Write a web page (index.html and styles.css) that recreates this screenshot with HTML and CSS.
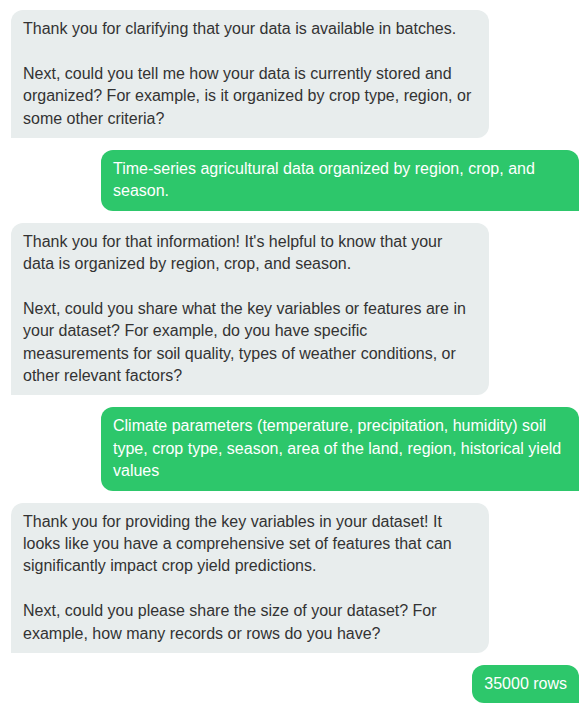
FILE: index.html
```html
<!DOCTYPE html>
<html lang="en">
<head>
<meta charset="utf-8">
<title>Chat</title>
<link rel="stylesheet" href="styles.css">
</head>
<body>
<div class="chat">
  <div class="msg bot">
    <p>Thank you for clarifying that your data is available in batches.</p>
    <p>Next, could you tell me how your data is currently stored and organized? For example, is it organized by crop type, region, or some other criteria?</p>
  </div>
  <div class="msg user">
    <p>Time-series agricultural data organized by region, crop, and season.</p>
  </div>
  <div class="msg bot">
    <p>Thank you for that information! It's helpful to know that your data is organized by region, crop, and season.</p>
    <p>Next, could you share what the key variables or features are in your dataset? For example, do you have specific measurements for soil quality, types of weather conditions, or other relevant factors?</p>
  </div>
  <div class="msg user">
    <p>Climate parameters (temperature, precipitation, humidity) soil type, crop type, season, area of the land, region, historical yield values</p>
  </div>
  <div class="msg bot">
    <p>Thank you for providing the key variables in your dataset! It looks like you have a comprehensive set of features that can significantly impact crop yield predictions.</p>
    <p>Next, could you please share the size of your dataset? For example, how many records or rows do you have?</p>
  </div>
  <div class="msg user">
    <p>35000 rows</p>
  </div>
</div>
</body>
</html>
```
FILE: styles.css
```css
html, body {
  margin: 0;
  padding: 0;
  background: #ffffff;
}

body {
  font-family: "Liberation Sans", Arial, Helvetica, sans-serif;
  font-size: 16px;
  line-height: 1.4;
}

.chat {
  display: flex;
  flex-direction: column;
  gap: 12px;
  padding: 10px 8px 10px 11px;
}

.msg {
  max-width: 478px;
  box-sizing: border-box;
  padding: 8px 12px;
  border-radius: 12px;
}

.msg p {
  margin: 0;
}

.msg p + p {
  margin-top: 1.4em;
}

.bot {
  align-self: flex-start;
  background: #e8eded;
  color: #333333;
  border-bottom-left-radius: 0;
}

.user {
  align-self: flex-end;
  background: #2dc76b;
  color: #ffffff;
  border-bottom-right-radius: 0;
}
```
